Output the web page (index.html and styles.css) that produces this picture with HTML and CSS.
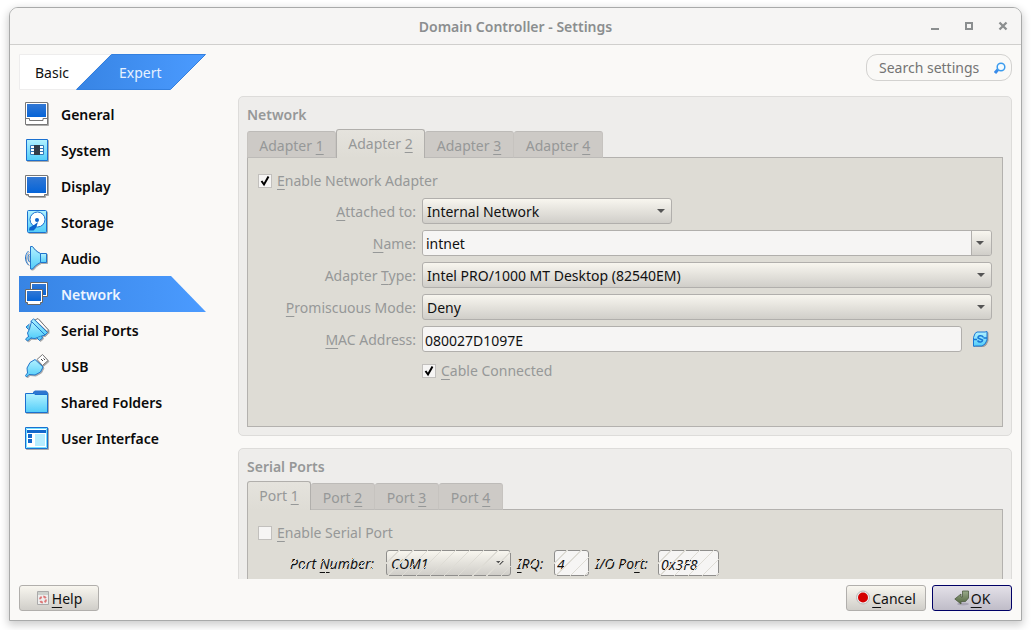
FILE: index.html
```html
<!DOCTYPE html>
<html lang="en">
<head>
<meta charset="utf-8">
<title>Domain Controller - Settings</title>
<link rel="stylesheet" href="styles.css">
</head>
<body>
<svg class="defs" width="0" height="0" aria-hidden="true">
  <defs>
    <linearGradient id="navy" x1="0" y1="0" x2="0" y2="1"><stop offset="0" stop-color="#3278d4"/><stop offset="1" stop-color="#0564d8"/></linearGradient>
    <linearGradient id="cyan" x1="0" y1="0" x2="0" y2="1"><stop offset="0" stop-color="#b4f2ff"/><stop offset="1" stop-color="#52cdf9"/></linearGradient>
    <linearGradient id="moss" x1="0" y1="0" x2="0" y2="1"><stop offset="0" stop-color="#9aab8b"/><stop offset="1" stop-color="#52643f"/></linearGradient>
    <filter id="drop" x="-20%" y="-20%" width="150%" height="150%" color-interpolation-filters="sRGB"><feDropShadow dx="1" dy="1" stdDeviation="0.3" flood-color="#777" flood-opacity="0.6"/></filter>
  </defs>
</svg>
<main class="window">
  <header class="titlebar">
    <h1 class="title">Domain Controller - Settings</h1>
    <div class="window-controls">
      <button class="window-button" aria-label="Minimize"><svg width="10" height="10"><path d="M1 8h8" stroke="#8b8e8f" stroke-width="2"/></svg></button>
      <button class="window-button" aria-label="Maximize"><svg width="10" height="10"><rect x="2" y="2" width="6" height="6" fill="none" stroke="#8b8e8f" stroke-width="2"/></svg></button>
      <button class="window-button" aria-label="Close"><svg width="10" height="10"><path d="M1.500 1.500l7 7M8.500 1.500l-7 7" stroke="#8b8e8f" stroke-width="2.300"/></svg></button>
    </div>
  </header>
  <div class="content">
    <aside class="sidebar">
      <div class="modes">
        <svg class="modes-shape" viewBox="0 0 187 36" aria-hidden="true">
          <defs><linearGradient id="mode" x1="0" y1="0" x2="1" y2="0"><stop offset="0" stop-color="#3784e4"/><stop offset="1" stop-color="#4b9bff"/></linearGradient></defs>
          <path d="M.5.500H92L57 35.500H.5z" fill="#fff" stroke="#eeeded"/>
          <path d="M92.500.500H186.500L151.500 35.500H57.500z" fill="url(#mode)" stroke="#3480df"/>
        </svg>
        <button class="mode">Basic</button>
        <button class="mode mode-expert">Expert</button>
      </div>
      <nav class="nav">
        <a class="nav-item" href="#general"><svg class="nav-icon" viewBox="0 0 24 24"><g filter="url(#drop)"><path d="M.5.500h22v22H.5z" fill="#fff" stroke="#777"/><path d="M2 2h19v13H2z" fill="url(#navy)"/><path d="M1 16.500h3.500v2H18v-2h4.500" fill="none" stroke="#777"/></g></svg>General</a>
        <a class="nav-item" href="#system"><svg class="nav-icon" viewBox="0 0 24 24"><g filter="url(#drop)"><path d="M1.500 1.500h21v21h-21z" fill="url(#cyan)" stroke="#1a70d0"/><path d="M5.500 7.500h13v9h-13zM5 10.500h14M5 13.500h14" fill="#fff" stroke="#3278b8"/><path d="M9 7h6v10H9z" fill="#333c48"/></g></svg>System</a>
        <a class="nav-item" href="#display"><svg class="nav-icon" viewBox="0 0 24 24"><g filter="url(#drop)"><path d="M.5 1.500h22v19h-3v2h-16v-2h-3z" fill="#fff" stroke="#777"/><path d="M2 3h19v16H2z" fill="url(#navy)"/></g></svg>Display</a>
        <a class="nav-item" href="#storage"><svg class="nav-icon" viewBox="0 0 24 24"><g filter="url(#drop)"><rect x="2.500" y=".5" width="19" height="22" rx="1" fill="url(#cyan)" stroke="#1a70d0"/><circle cx="12.500" cy="9.500" r="7.500" fill="#fff" stroke="#1a70d0"/><circle cx="12" cy="10" r="2" fill="#0c62cc"/><path d="M13 12l-2 6-2.500 2.500H4l.5-3L9 15z" fill="#0c62cc"/></g></svg>Storage</a>
        <a class="nav-item" href="#audio"><svg class="nav-icon" viewBox="0 0 24 24"><g filter="url(#drop)"><path d="M15.500 7.500h6v9h-6z" fill="url(#cyan)" stroke="#2074cc"/><path d="M5.500.500H7.500c2 3 4 5 8 7v9c-4 2-6 4-8 6.500H5.500z" fill="url(#cyan)" stroke="#2074cc"/><path d="M4.500 8c-2 2-2 6 0 8M3.500 5c-4 4-4 10 0 14" fill="none" stroke="#2074cc"/></g></svg>Audio</a>
        <a class="nav-item nav-current" href="#network" aria-current="page"><svg class="nav-icon" viewBox="0 0 24 24"><g stroke="#666"><path d="M5.500.500h17v14h-17z" fill="#fff"/><path d="M7 2h14v11H7z" fill="url(#navy)" stroke="none"/><path d="M.5 7.500h17v13h-2v2h-13v-2h-2z" fill="#fff"/><path d="M2 9h14v10H2z" fill="url(#navy)" stroke="none"/></g></svg>Network</a>
        <a class="nav-item" href="#serial"><svg class="nav-icon" viewBox="0 0 24 24"><g filter="url(#drop)" stroke="#2276ca"><path d="M10 2l3-1.500 10 11v3z" fill="#fff" stroke="#777"/><path d="M8.500.8l14 13.700-2.800 2.800L5.800 3.500z" fill="url(#cyan)"/><path d="M6.500 3.500L20 17l-5 1.500-5 2-6-.5-1.500-5 2-4z" fill="url(#cyan)"/><path d="M4.500 6L1 9l2.500 2.500M4 18l-3.500 3 2 2 4-3.500M12 20l2.500 2.500 3-2.500-1-2" fill="#58c8f5"/></g></svg>Serial Ports</a>
        <a class="nav-item" href="#usb"><svg class="nav-icon" viewBox="0 0 24 24"><g filter="url(#drop)"><path d="M17.500.500l5.500 6-5.500 5-5.500-6z" fill="#fff" stroke="#777"/><path d="M16 5l2 2M18.500 4.500l1.500 1.500" stroke="#444"/><path d="M10 5.500L18 13l-2.500 5-5.500 3-6-.5L1.500 23l-1-1.500L2.500 19l-.5-5L5 8.500z" fill="url(#cyan)" stroke="#2276ca"/></g></svg>USB</a>
        <a class="nav-item" href="#folders"><svg class="nav-icon" viewBox="0 0 24 24"><g filter="url(#drop)"><path d="M8 4V2l2-1.500h11l2 2V5H8z" fill="#2e76cf"/><path d="M.5 3.500H9l1 1h12.500v18H.5z" fill="url(#cyan)" stroke="#1a70d0"/></g></svg>Shared Folders</a>
        <a class="nav-item" href="#interface"><svg class="nav-icon" viewBox="0 0 24 24"><g filter="url(#drop)"><path d="M.5 1.500h22v21H.5z" fill="#fff" stroke="#1a70d0"/><path d="M1.500 2.500h20v19h-20z" fill="none" stroke="#75dfff"/><path d="M2 4h19v3H2zM3 8h4v4H3zM3 13h4v4H3z" fill="#1268cc"/><path d="M10 8h10v12H10z" fill="#b6edff"/></g></svg>User Interface</a>
      </nav>
    </aside>
    <div class="main">
      <div class="search">
        <input class="search-input" type="search" placeholder="Search settings" aria-label="Search settings">
        <svg class="search-icon" viewBox="0 0 12 12" aria-hidden="true"><path d="M1 11l3-3.500" stroke="#3a8cea" stroke-width="3"/><circle cx="7" cy="5" r="3.800" fill="#f4fbff" stroke="#3a9bee" stroke-width="1.500"/></svg>
      </div>
      <div class="panels">
        <section class="group">
          <h2 class="group-title">Network</h2>
          <div class="tabs adapter-tabs" role="tablist">
            <button class="tab" role="tab">Adapter&nbsp;<u>1</u></button>
            <button class="tab tab-active" role="tab" aria-selected="true">Adapter&nbsp;<u>2</u></button>
            <button class="tab" role="tab">Adapter&nbsp;<u>3</u></button>
            <button class="tab" role="tab">Adapter&nbsp;<u>4</u></button>
          </div>
          <div class="page network-page">
            <label class="check"><input class="tick" type="checkbox" checked><span><u>E</u>nable Network Adapter</span></label>
            <div class="form">
              <label class="label" for="attached"><u>A</u>ttached to:</label>
              <select class="field select short" id="attached"><option>Internal Network</option></select>
              <label class="label" for="name"><u>N</u>ame:</label>
              <div class="combo"><input class="combo-input" id="name" type="text" value="intnet"><button class="combo-button" aria-label="Show names"></button></div>
              <label class="label" for="type">Adapter <u>T</u>ype:</label>
              <select class="field select" id="type"><option>Intel PRO/1000 MT Desktop (82540EM)</option></select>
              <label class="label" for="mode-select"><u>P</u>romiscuous Mode:</label>
              <select class="field select" id="mode-select"><option>Deny</option></select>
              <label class="label" for="mac"><u>M</u>AC Address:</label>
              <div class="mac"><input class="field text" id="mac" type="text" value="080027D1097E">
                <button class="refresh" aria-label="Generate new address"><svg width="18" height="16" viewBox="0 0 18 16"><g filter="url(#drop)"><path d="M5 1h8l2-.500v8.500l-2 4-3 2H3.500l-2 .3V6.500L3 2.500z" fill="url(#cyan)" stroke="#1977d5"/><path d="M1.500 8.500H5M11.500 7H15" stroke="#1977d5" stroke-width="1.500"/><path d="M11.500 6.500C10 3.500 5.500 4.500 6 7l4.500 2C11 11 7 12 5.500 9.500" fill="none" stroke="#1977d5" stroke-width="1.500"/></g></svg></button></div>
              <label class="check cable"><input class="tick" type="checkbox" checked><span><u>C</u>able Connected</span></label>
            </div>
          </div>
        </section>
        <section class="group">
          <h2 class="group-title">Serial Ports</h2>
          <div class="tabs port-tabs" role="tablist">
            <button class="tab tab-active" role="tab" aria-selected="true">Port&nbsp;<u>1</u></button>
            <button class="tab" role="tab">Port&nbsp;<u>2</u></button>
            <button class="tab" role="tab">Port&nbsp;<u>3</u></button>
            <button class="tab" role="tab">Port&nbsp;<u>4</u></button>
          </div>
          <div class="page">
            <label class="check"><input class="tick" type="checkbox"><span><u>E</u>nable Serial Port</span></label>
            <div class="serial-row">
              <label class="serial-label port-label" for="port">Port <u>N</u>umber:</label>
              <div class="hatched port-box"><select class="field select" id="port" disabled><option>COM1</option></select></div>
              <label class="serial-label irq-label" for="irq"><u>I</u>RQ:</label>
              <div class="hatched irq-box"><input class="field text" id="irq" type="text" value="4" disabled></div>
              <label class="serial-label io-label" for="io">I/O Po<u>r</u>t:</label>
              <div class="hatched io-box"><input class="field text" id="io" type="text" value="0x3F8" disabled></div>
            </div>
          </div>
        </section>
      </div>
    </div>
  </div>
  <footer class="footer">
    <button class="button help"><svg width="14" height="16" viewBox="0 0 14 16"><path d="M1.500 1.500h11v13h-11z" fill="#eee" stroke="#aaa"/><path d="M2 2h10v3H2z" fill="#ccd0cc"/><circle cx="7" cy="9.500" r="3" fill="none" stroke="#dc7777" stroke-width="2" stroke-dasharray="3 1.700"/></svg><span><u>H</u>elp</span></button>
    <button class="button cancel"><svg width="14" height="16" viewBox="0 0 14 16"><circle cx="7" cy="7.500" r="6.500" fill="#eee" stroke="#bbb"/><circle cx="7" cy="7.500" r="5" fill="#d40000"/></svg><span><u>C</u>ancel</span></button>
    <button class="button ok"><svg width="16" height="16" viewBox="0 0 16 16"><ellipse cx="9" cy="14" rx="6" ry="1.500" fill="#aaa6b5"/><path d="M8.500 1h6v7l-3 3.500H7V14L.8 9 7 4v3h1.500z" fill="url(#moss)" stroke="#4d5b40" stroke-width=".8"/></svg><span><u>O</u>K</span></button>
  </footer>
</main>
</body>
</html>
```
FILE: styles.css
```css
* { box-sizing: border-box; }
body {
  margin: 0;
  height: 100vh;
  padding: 7px 9px 9px;
  display: flex;
  background: #fff;
  color: #111;
  font: 14px/20px "Noto Sans", sans-serif;
}
button, input, select { font: inherit; color: inherit; margin: 0; }
button { padding: 0; border: 0; background: none; }
u { text-decoration: underline; text-decoration-thickness: 1px; text-underline-offset: 3px; text-decoration-skip-ink: none; }
.defs { position: absolute; }
.window {
  flex: 1;
  min-width: 0;
  display: flex;
  flex-direction: column;
  border: 1px solid #a9aaaa;
  border-radius: 9px 9px 0 0;
  background: #faf9f7;
  box-shadow: 0 3px 9px 1px rgba(0, 0, 0, .2);
}
.titlebar {
  position: relative;
  flex: none;
  height: 37px;
  display: flex;
  align-items: center;
  justify-content: center;
  border-bottom: 1px solid #d0cfcd;
  border-radius: 8px 8px 0 0;
  background: #f6f5f4;
}
.title { margin: 0; padding-top: 2px; font-size: 14px; font-weight: 600; color: #8b8e8f; }
.window-controls { position: absolute; right: 13px; display: flex; gap: 24px; }
.window-button { width: 10px; height: 10px; }
.window-button svg, .refresh svg { display: block; }
.content { flex: 1; min-height: 0; display: flex; gap: 32px; padding: 9px 9px 0; }
.sidebar { flex: none; width: 187px; }
.modes { position: relative; height: 36px; display: flex; align-items: center; padding: 2px 0 0 16px; gap: 50px; }
.modes-shape { position: absolute; inset: 0; }
.mode { position: relative; }
.mode-expert { color: #e6f1ff; }
.nav { margin-top: 6px; }
.nav-item {
  height: 36px;
  display: flex;
  align-items: center;
  gap: 12px;
  padding: 2px 0 0 6px;
  color: #0a0a0a;
  font-weight: 600;
  text-decoration: none;
}
.nav-icon { width: 24px; height: 24px; margin-top: -2px; overflow: visible; }
.nav-current {
  color: #edf5ff;
  background: linear-gradient(90deg, #3784e4, #4b9bff);
  clip-path: polygon(0 0, 152px 0, 100% 100%, 0 100%);
}
.main { flex: 1; min-width: 0; display: flex; flex-direction: column; }
.search {
  align-self: flex-end;
  flex: none;
  width: 146px;
  height: 27px;
  display: flex;
  align-items: center;
  padding: 0 5px 0 12px;
  border: 1px solid #d3d2d0;
  border-radius: 11px;
}
.search-input { flex: 1; min-width: 0; padding: 0; border: 0; outline: 0; background: none; appearance: none; }
.search-input::placeholder { color: #747474; opacity: 1; }
.search-icon { width: 12px; height: 12px; }
.panels { flex: 1; min-height: 0; margin-top: 15px; overflow: hidden; display: flex; flex-direction: column; gap: 12px; }
.group { flex: none; padding: 8px; border: 1px solid #dddcda; border-radius: 5px; background: #eeedeb; color: #969898; }
.group-title { margin: 0; font-size: 14px; line-height: 20px; font-weight: 600; }
.tabs { position: relative; display: flex; align-items: flex-end; height: 33px; margin-bottom: -1px; padding-top: 4px; }
.tab {
  height: 27px;
  padding: 2px 0 0;
  border: 1px solid #bdbbb8;
  border-right-color: #c6c3bf;
  border-left-color: #c6c3bf;
  border-radius: 3px 3px 0 0;
  background: #cdcac6;
}
.adapter-tabs .tab { width: 89px; }
.port-tabs .tab { width: 64px; }
.tab + .tab { border-left: 0; }
.tab.tab-active { height: 29px; padding: 0; border: 1px solid #b1afac; border-bottom: 0; background: linear-gradient(#e5e3dd, #dedcd5); }
.page { padding: 14px 10px; border: 1px solid #b3b1ae; background: #dedcd5; }
.network-page { height: 270px; }
.check { display: flex; align-items: center; gap: 5px; line-height: 18px; }
.tick { flex: none; appearance: none; width: 14px; height: 14px; border: 1px solid #c2c0bd; background: #f6f5f4; }
.tick:checked { background: #f6f5f4 url("data:image/svg+xml,%3Csvg xmlns='http://www.w3.org/2000/svg' viewBox='0 0 12 12'%3E%3Cpath d='M2.500 6l2.500 3.500 4.500-8' fill='none' stroke='%23000' stroke-width='2'/%3E%3C/svg%3E") center / 12px 12px no-repeat; }
.form { display: grid; grid-template-columns: 158px minmax(0, 1fr); column-gap: 6px; row-gap: 6px; align-items: center; margin-top: 8px; }
.label { padding-top: 2px; text-align: right; white-space: nowrap; }
.field { width: 100%; height: 26px; min-width: 0; border: 1px solid #b1afac; border-radius: 3px; color: #111; opacity: 1; }
.select {
  appearance: none;
  padding: 2px 20px 0 4px;
  background: url("data:image/svg+xml,%3Csvg xmlns='http://www.w3.org/2000/svg' viewBox='0 0 8 4'%3E%3Cpath d='M0 0h8L4 4z' fill='%23555'/%3E%3C/svg%3E") right 6px center / 8px 4px no-repeat, linear-gradient(#f8f6ef, #d0cec9);
}
.short { width: 250px; }
.text { padding: 2px 2px 0; background: #f6f5f4; }
.combo { display: flex; height: 26px; border: 1px solid #b1afac; border-radius: 3px; overflow: hidden; color: #111; }
.combo-input { flex: 1; min-width: 0; padding: 2px 3px 0; border: 0; background: #f6f5f4; }
.combo-button {
  width: 20px;
  border-left: 1px solid #b1afac;
  background: url("data:image/svg+xml,%3Csvg xmlns='http://www.w3.org/2000/svg' viewBox='0 0 8 4'%3E%3Cpath d='M0 0h8L4 4z' fill='%23555'/%3E%3C/svg%3E") 4px center / 8px 4px no-repeat, linear-gradient(#f8f6ef, #d0cec9);
}
.mac { display: flex; align-items: center; gap: 10px; padding-right: 2px; }
.refresh { flex: none; width: 18px; height: 18px; }
.cable { grid-column: 2; margin-top: 4px; }
.serial-row { display: flex; align-items: center; gap: 6px; margin: 8px 0 0 32px; color: #111; font-style: italic; }
.serial-label { padding-top: 2px; white-space: nowrap; }
.port-label { width: 90px; }
.irq-label { width: 31px; }
.io-label { width: 57px; }
.serial-label, .hatched { position: relative; }
.serial-label::after, .hatched::after {
  content: "";
  position: absolute;
  inset: 0;
  background: repeating-linear-gradient(135deg, transparent 0 9px, #dedcd5 9px 10px);
  pointer-events: none;
}
.hatched .field { display: block; border-color: #8f8e8c; }
.port-box { width: 125px; }
.irq-box { width: 35px; }
.io-box { width: 61px; }
.footer { flex: none; display: flex; gap: 6px; padding: 6px 9px 9px; }
.button {
  width: 80px;
  height: 26px;
  display: flex;
  align-items: center;
  justify-content: center;
  gap: 2px;
  border: 1px solid #b1afac;
  border-radius: 3px;
  background: linear-gradient(#f8f6ef, #d0cec9);
}
.button span { padding-top: 2px; }
.help { margin-right: auto; }
.ok { gap: 1px; border-color: #000066; background: linear-gradient(#e3e0e8, #bfbcc8); }
```
